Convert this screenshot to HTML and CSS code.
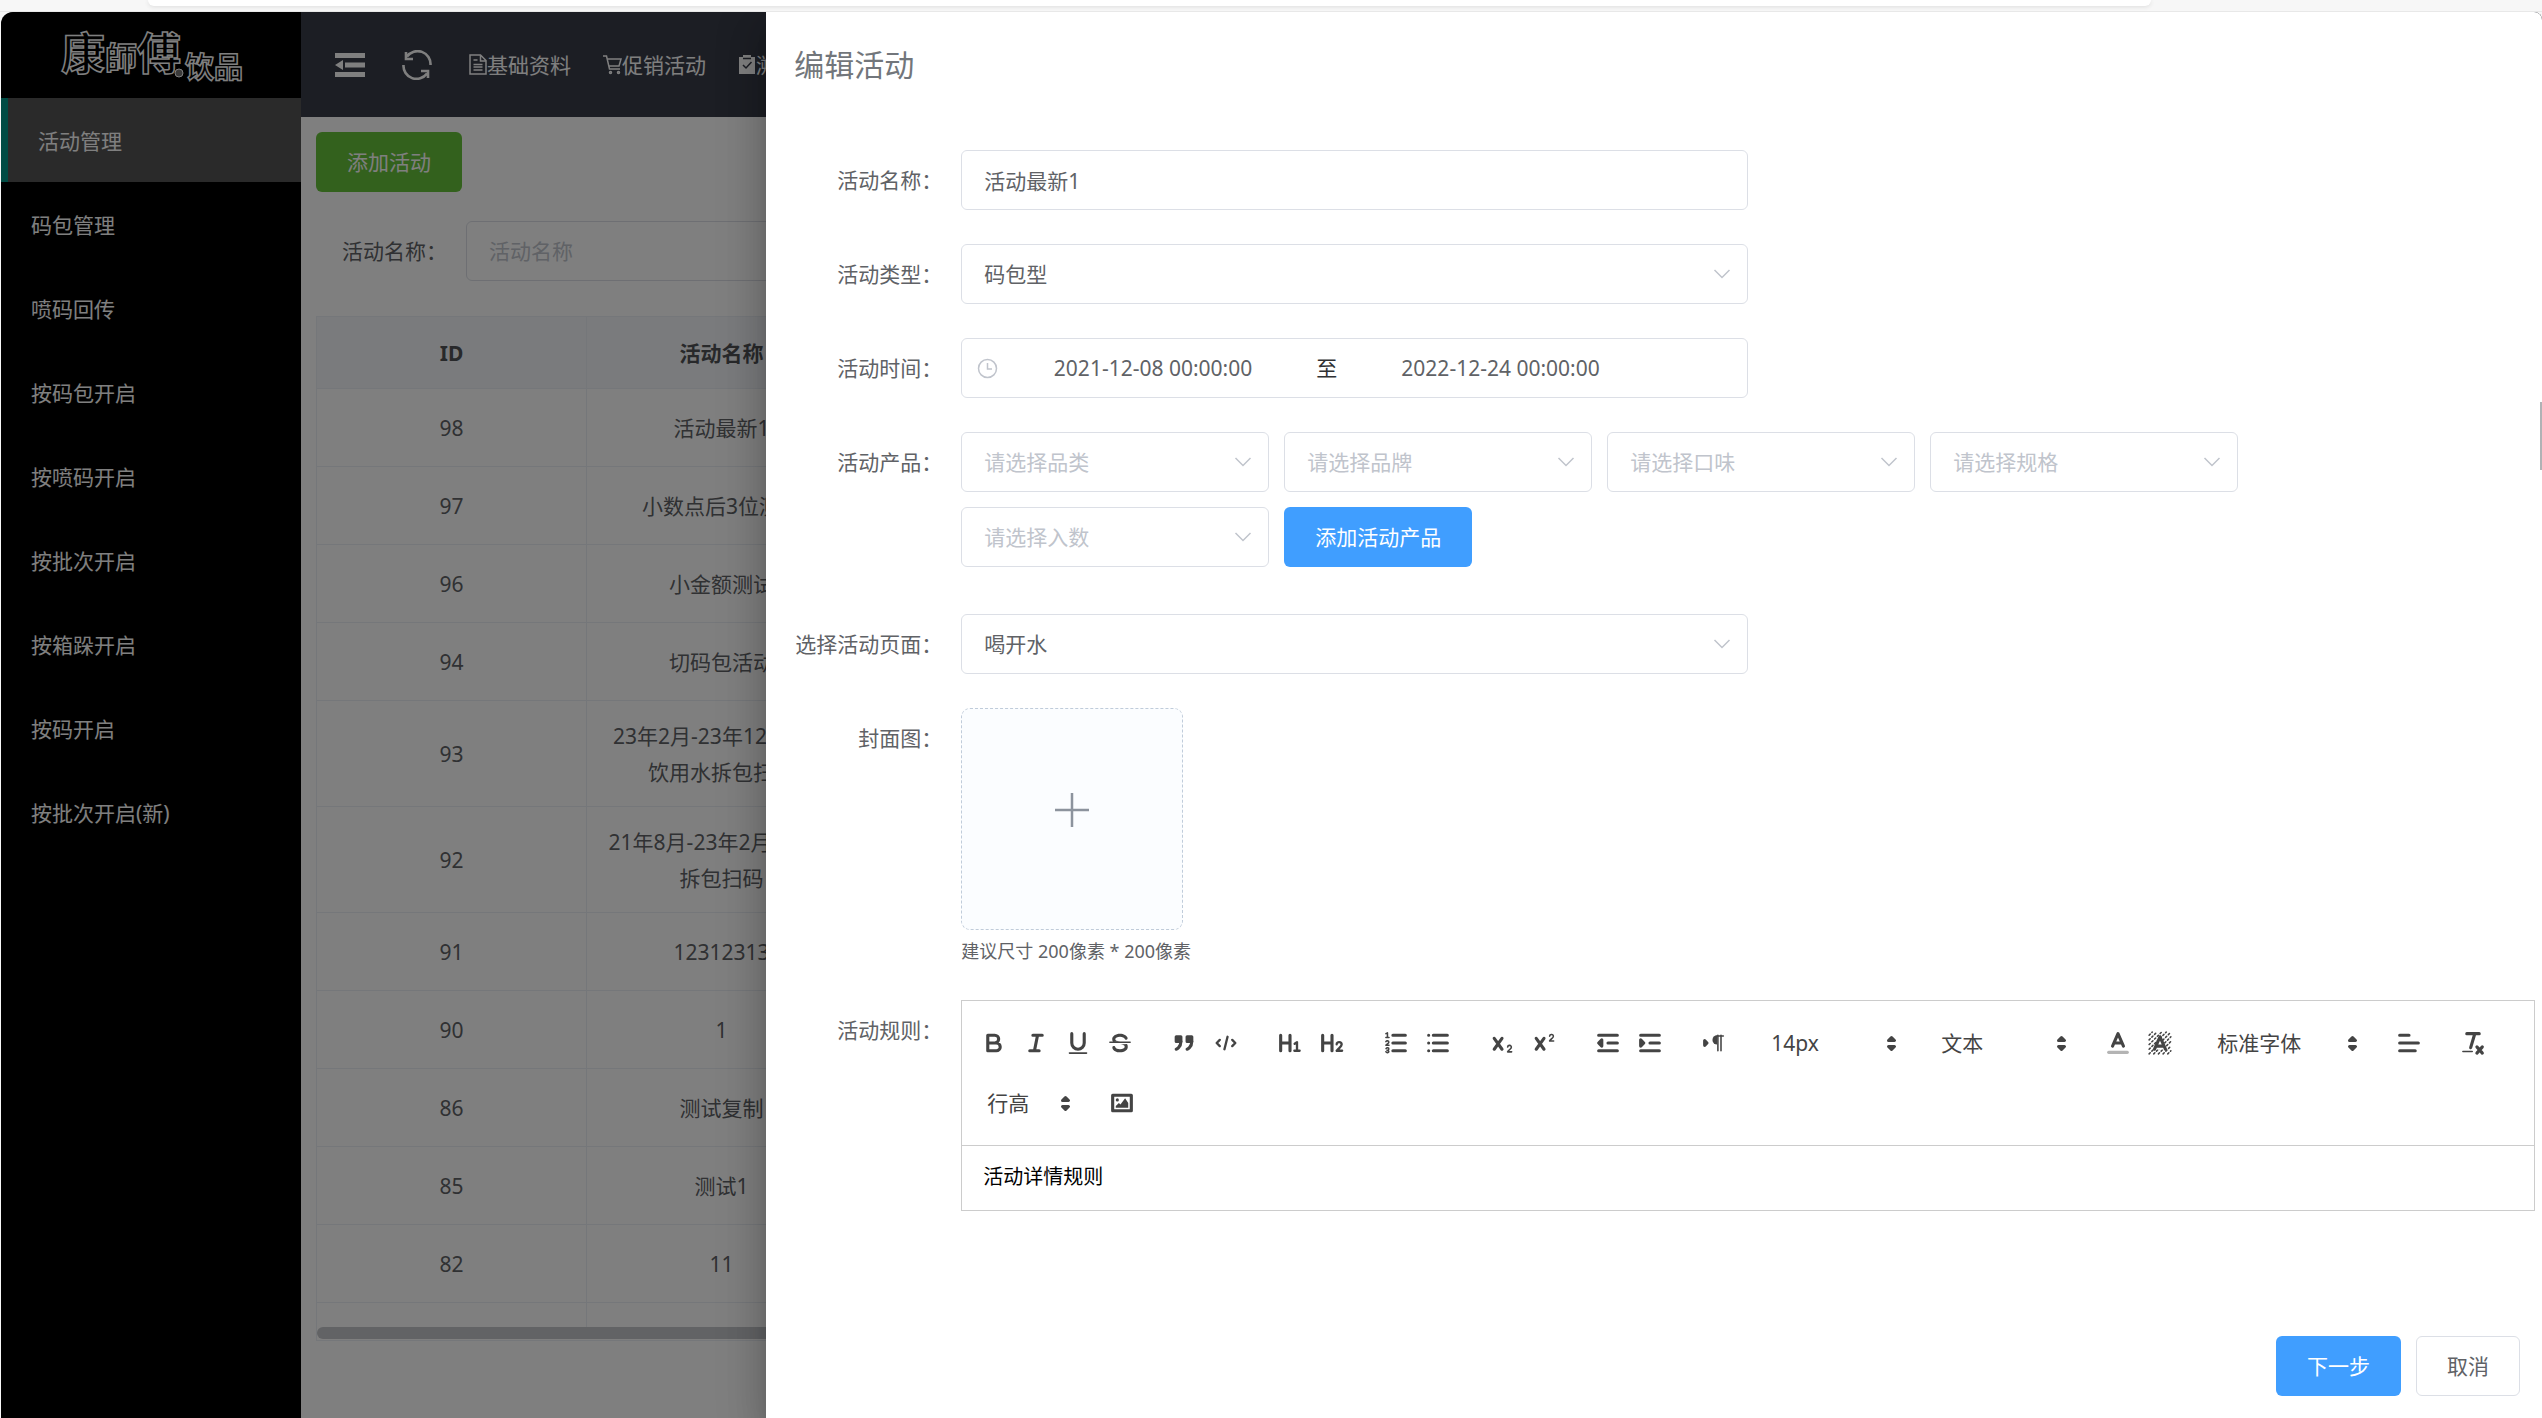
FILE: index.html
```html
<!DOCTYPE html>
<html lang="zh-CN">
<head>
<meta charset="utf-8">
<title>编辑活动</title>
<link rel="stylesheet" href="styles.css">
</head>
<body>
<svg class="sprite" aria-hidden="true">
  <symbol id="chevron" viewBox="0 0 18 18"><path d="M1.500 5 9 12.500 16.500 5" fill="none" stroke="#c0c4cc" stroke-width="1.500"/></symbol>
  <symbol id="sort" viewBox="0 0 18 18"><path d="M7 11 9 13 11 11ZM7 7 9 5 11 7Z" fill="#444" stroke="#444" stroke-width="2" stroke-linejoin="round"/></symbol>
</svg>

<div class="chrome"><div class="chrome-bar"></div></div>

<div class="app">
  <aside class="sidebar">
    <div class="logo">
      <svg width="200" height="86" viewBox="0 0 200 86" role="img" aria-label="康师傅饮品">
        <g class="logo-text">
          <text x="10" y="58" font-size="44">康</text>
          <text x="54" y="58" font-size="32">師</text>
          <text x="86" y="58" font-size="44">傅</text>
          <text x="134" y="66" font-size="29">饮品</text>
        </g>
        <circle cx="128" cy="61" r="4" fill="#777" stroke="#fff"/>
      </svg>
    </div>
    <nav class="menu">
      <a class="menu-item active" href="#">活动管理</a>
      <a class="menu-item" href="#">码包管理</a>
      <a class="menu-item" href="#">喷码回传</a>
      <a class="menu-item" href="#">按码包开启</a>
      <a class="menu-item" href="#">按喷码开启</a>
      <a class="menu-item" href="#">按批次开启</a>
      <a class="menu-item" href="#">按箱跺开启</a>
      <a class="menu-item" href="#">按码开启</a>
      <a class="menu-item" href="#">按批次开启(新)</a>
    </nav>
  </aside>

  <div class="main">
    <header class="topbar">
      <button class="top-btn" type="button" aria-label="收起菜单">
        <svg width="30" height="30" viewBox="0 0 30 30" fill="#fff"><path d="M0 3h30v5H0zM10 12.500h20v5H10zM0 22h30v5H0zM0 15l8-5v10z"/></svg>
      </button>
      <button class="top-btn" type="button" aria-label="刷新">
        <svg width="30" height="30" viewBox="0 0 30 30" fill="none" stroke="#fff" stroke-width="2.600"><path d="M5 6.500A13 13 0 0 1 28.500 15M1.500 15A13 13 0 0 0 25 23.500M4 2v7h7M26 28v-7h-7"/></svg>
      </button>
      <nav class="top-nav">
        <a href="#"><svg width="18" height="21" viewBox="0 0 18 21" fill="none" stroke="#fff" stroke-width="1.500"><path d="M1 1h10.500L17 6.500V20H1zM11.500 1v6H17M4.500 6h4M4.500 10.500h9M4.500 13h9M4.500 16h9"/></svg>基础资料</a>
        <a href="#"><svg width="19" height="21" viewBox="0 0 19 21" fill="none" stroke="#fff" stroke-width="1.500"><path d="M0 2h3.500l3 13H17M4.500 5H18l-2 7H6"/><circle cx="7.500" cy="18.500" r="1"/><circle cx="15.500" cy="18.500" r="1"/></svg>促销活动</a>
        <a href="#"><svg width="18" height="21" viewBox="0 0 18 21"><path d="M1 3h4V1h8v2h4v17H1z" fill="#fff"/><path d="M5 4.500h8M5 11l3 3 5.500-6" fill="none" stroke="#393d49" stroke-width="1.500"/></svg>溯源管理</a>
      </nav>
    </header>
    <section class="page">
      <button class="btn btn-success" type="button">添加活动</button>
      <div class="search">
        <label for="q">活动名称：</label>
        <input class="field" id="q" type="text" placeholder="活动名称">
      </div>
      <div class="table-wrap">
        <table class="table">
          <colgroup><col class="col"><col class="col"><col></colgroup>
          <thead><tr><th>ID</th><th>活动名称</th><th></th></tr></thead>
          <tbody>
            <tr><td>98</td><td>活动最新1</td><td></td></tr>
            <tr><td>97</td><td>小数点后3位测试</td><td></td></tr>
            <tr><td>96</td><td>小金额测试</td><td></td></tr>
            <tr><td>94</td><td>切码包活动</td><td></td></tr>
            <tr class="tall"><td>93</td><td>23年2月-23年12月包装<br>饮用水拆包扫码</td><td></td></tr>
            <tr class="tall"><td>92</td><td>21年8月-23年2月饮用水<br>拆包扫码</td><td></td></tr>
            <tr><td>91</td><td>12312313</td><td></td></tr>
            <tr><td>90</td><td>1</td><td></td></tr>
            <tr><td>86</td><td>测试复制</td><td></td></tr>
            <tr><td>85</td><td>测试1</td><td></td></tr>
            <tr><td>82</td><td>11</td><td></td></tr>
            <tr class="cut"><td></td><td></td><td></td></tr>
          </tbody>
        </table>
        <div class="scroll-thumb"></div>
      </div>
    </section>
  </div>

  <div class="mask"></div>

  <form class="drawer" aria-labelledby="drawer-title">
    <h1 class="drawer-title" id="drawer-title">编辑活动</h1>
    <div class="drawer-body">
      <div class="row">
        <label for="name">活动名称：</label>
        <input class="field half" id="name" type="text" value="活动最新1">
      </div>
      <div class="row">
        <label for="type">活动类型：</label>
        <div class="select half"><select class="field" id="type"><option>码包型</option></select><svg><use href="#chevron"/></svg></div>
      </div>
      <div class="row">
        <label for="start">活动时间：</label>
        <div class="field half range">
          <svg width="21" height="21" viewBox="0 0 21 21" fill="none" stroke="#c0c4cc" stroke-width="1.500"><circle cx="10.500" cy="10.500" r="9"/><path d="M10.500 5v6h4.500"/></svg>
          <input id="start" type="text" value="2021-12-08 00:00:00">
          <span>至</span>
          <input type="text" value="2022-12-24 00:00:00" aria-label="结束时间">
        </div>
      </div>
      <div class="row">
        <label for="cat">活动产品：</label>
        <div class="products">
          <div class="select empty"><select class="field" id="cat"><option>请选择品类</option></select><svg><use href="#chevron"/></svg></div>
          <div class="select empty"><select class="field" aria-label="品牌"><option>请选择品牌</option></select><svg><use href="#chevron"/></svg></div>
          <div class="select empty"><select class="field" aria-label="口味"><option>请选择口味</option></select><svg><use href="#chevron"/></svg></div>
          <div class="select empty"><select class="field" aria-label="规格"><option>请选择规格</option></select><svg><use href="#chevron"/></svg></div>
          <div class="select empty"><select class="field" aria-label="入数"><option>请选择入数</option></select><svg><use href="#chevron"/></svg></div>
          <button class="btn btn-primary" type="button">添加活动产品</button>
        </div>
      </div>
      <div class="row">
        <label for="page">选择活动页面：</label>
        <div class="select half"><select class="field" id="page"><option>喝开水</option></select><svg><use href="#chevron"/></svg></div>
      </div>
      <div class="row">
        <label for="cover">封面图：</label>
        <div>
          <button class="upload" id="cover" type="button" aria-label="上传封面图">
            <svg width="36" height="36" viewBox="0 0 36 36" stroke="#8c939d" stroke-width="2.500"><path d="M18 1v34M1 18h34"/></svg>
          </button>
          <p class="hint">建议尺寸 200像素 * 200像素</p>
        </div>
      </div>
      <div class="row">
        <label for="rules">活动规则：</label>
        <div class="editor">
          <div class="toolbar">
            <div class="group">
              <button type="button" aria-label="加粗"><svg viewBox="0 0 18 18"><path class="s" d="M5 4h4.500A2.500 2.500 0 0 1 12 6.500 2.500 2.500 0 0 1 9.500 9H5V4ZM5 9h5.500a2.500 2.500 0 0 1 2.500 2.500 2.500 2.500 0 0 1-2.500 2.500H5V9Z"/></svg></button>
              <button type="button" aria-label="斜体"><svg viewBox="0 0 18 18"><path class="s" d="M7 4h6M5 14h6M8 14 10 4"/></svg></button>
              <button type="button" aria-label="下划线"><svg viewBox="0 0 18 18"><path class="s" d="M5 3v6a4 4 0 0 0 8 0V3"/><rect class="f" x="3" y="15" width="12" height="1" rx=".5"/></svg></button>
              <button type="button" aria-label="删除线"><svg viewBox="0 0 18 18"><path class="s t" d="M15.500 8.500h-13"/><path class="f" d="M9.007 8C6.542 7.791 6 7.519 6 6.500 6 5.792 7.283 5 9 5c1.571 0 2.765.679 2.969 1.309a1 1 0 0 0 1.900-.617C13.356 4.106 11.354 3 9 3 6.200 3 4 4.538 4 6.500a3.200 3.200 0 0 0 .5 1.843ZM8.984 10C11.457 10.208 12 10.479 12 11.500c0 .708-1.283 1.500-3 1.500-1.571 0-2.765-.679-2.969-1.309a1 1 0 1 0-1.900.617C4.644 13.894 6.646 15 9 15c2.800 0 5-1.538 5-3.500a3.200 3.200 0 0 0-.5-1.843Z"/></svg></button>
            </div>
            <div class="group">
              <button type="button" aria-label="引用"><svg viewBox="0 0 18 18"><path class="f s" d="M4 5h3v3H4zM11 5h3v3h-3z"/><path class="s" d="M7 8c0 4.031-3 5-3 5M14 8c0 4.031-3 5-3 5"/></svg></button>
              <button type="button" aria-label="代码"><svg viewBox="0 0 18 18"><path class="s m" d="M5 7 3 9l2 2M13 7l2 2-2 2M10 5 8 13"/></svg></button>
            </div>
            <div class="group">
              <button type="button" aria-label="一级标题"><svg viewBox="0 0 18 18"><path class="s" d="M3 4v10M9 4v10M3 9h6"/><path class="s m" d="M12 9.500 13.500 8.500V14M11.800 14h3.400"/></svg></button>
              <button type="button" aria-label="二级标题"><svg viewBox="0 0 18 18"><path class="s" d="M3 4v10M9 4v10M3 9h6"/><path class="s m" d="M12 9.800c0-1.800 3.200-1.800 3.200.2 0 1.200-1.500 2-3.200 4h3.500"/></svg></button>
            </div>
            <div class="group">
              <button type="button" aria-label="有序列表"><svg viewBox="0 0 18 18"><path class="s" d="M7 4h8M7 9h8M7 14h8"/><path class="s t" d="M2.500 5.500h2M3.500 5.500v-3l-1 .5M4.500 10.500h-2c0-.3 1.900-1.200 1.900-2 0-1-1.400-1.200-1.900-.4M2.500 14.600c.500 1 1.900.6 1.900-.1s-.5-.8-1.200-.8c.7 0 1.200-.3 1.200-.9 0-.8-1.300-1-1.800-.2"/></svg></button>
              <button type="button" aria-label="无序列表"><svg viewBox="0 0 18 18"><path class="s" d="M6 4h9M6 9h9M6 14h9M3 4v.01M3 9v.01M3 14v.01"/></svg></button>
            </div>
            <div class="group">
              <button type="button" aria-label="下标"><svg viewBox="0 0 18 18"><path class="s" d="M4 6l5 7M9 6l-5 7"/><path class="s t" d="M12.600 11.600c.200-1.600 2.600-1.300 2.400.2-.1 1-1.600 1.500-2.400 2.900h2.600"/></svg></button>
              <button type="button" aria-label="上标"><svg viewBox="0 0 18 18"><path class="s" d="M4 6l5 7M9 6l-5 7"/><path class="s t" d="M12.600 4.600c.200-1.600 2.600-1.300 2.400.2-.1 1-1.600 1.500-2.400 2.900h2.600"/></svg></button>
            </div>
            <div class="group">
              <button type="button" aria-label="减少缩进"><svg viewBox="0 0 18 18"><path class="s" d="M3 14h12M3 4h12M9 9h6"/><path class="f s" d="M5 7v4L3 9z"/></svg></button>
              <button type="button" aria-label="增加缩进"><svg viewBox="0 0 18 18"><path class="s" d="M3 14h12M3 4h12M9 9h6"/><path class="f s" d="M3 7v4l2-2z"/></svg></button>
            </div>
            <div class="group">
              <button type="button" aria-label="文字方向"><svg viewBox="0 0 18 18"><path class="f s" d="M3 7.500v3L4.500 9z"/><path class="f" d="M11 4a2.600 2.600 0 0 0 0 6z"/><path class="s t" d="M15 4.500h-4M11.500 4v10M13.500 4v10"/></svg></button>
            </div>
            <div class="group"><div class="picker"><select aria-label="字号"><option>14px</option></select><svg><use href="#sort"/></svg></div></div>
            <div class="group"><div class="picker"><select aria-label="段落"><option>文本</option></select><svg><use href="#sort"/></svg></div></div>
            <div class="group">
              <button type="button" aria-label="文字颜色"><svg viewBox="0 0 18 18"><path d="M3 15h12" stroke="#b4b4b4" stroke-width="2" stroke-linecap="round"/><path class="s" d="M5.500 11 9 3l3.500 8M6.500 9h5"/></svg></button>
              <button type="button" aria-label="背景颜色"><svg viewBox="0 0 18 18"><path class="s t hatch" d="M2 4l2-2M2 7l5-5M2 10l8-8M2 13l11-11M2 16l14-14M5 16l11-11M8 16l8-8M11 16l5-5M14 16l2-2"/><path d="M5.500 13 9 5l3.500 8z" fill="#fff"/><path class="s" d="M5.500 13 9 5l3.500 8M6.500 11h5"/></svg></button>
            </div>
            <div class="group"><div class="picker font"><select aria-label="字体"><option>标准字体</option></select><svg><use href="#sort"/></svg></div></div>
            <div class="group">
              <button type="button" aria-label="对齐"><svg viewBox="0 0 18 18"><path class="s" d="M3 9h12M3 14h10M3 4h6"/></svg></button>
            </div>
            <div class="group">
              <button type="button" aria-label="清除格式"><svg viewBox="0 0 18 18"><path class="s" d="M5 3h8M7.500 12 10 3.500M11.500 11.500l3.500 4M15 11.500l-3.500 4"/><rect class="f" x="2" y="14" width="7" height="1" rx=".5"/></svg></button>
            </div>
            <div class="group"><div class="picker narrow"><select aria-label="行高"><option>行高</option></select><svg><use href="#sort"/></svg></div></div>
            <div class="group">
              <button type="button" aria-label="图片"><svg viewBox="0 0 18 18"><path class="s" d="M3 4h12v10H3z"/><circle class="f" cx="6" cy="7" r="1"/><path class="f" d="M5 12v-1l2-2 1 1 3-4 2 3v3z"/></svg></button>
            </div>
          </div>
          <textarea id="rules" rows="1">活动详情规则</textarea>
        </div>
      </div>
    </div>
    <footer class="drawer-footer">
      <button class="btn btn-primary" type="button">下一步</button>
      <button class="btn btn-plain" type="button">取消</button>
    </footer>
    <div class="page-thumb"></div>
  </form>
</div>
</body>
</html>
```
FILE: styles.css
```css
* {
  box-sizing: border-box;
}

body {
  margin: 0;
  height: 100vh;
  display: flex;
  flex-direction: column;
  overflow: hidden;
  background: #f7f7f7;
  color: #606266;
  font: 21px/34px "Noto Sans", "Noto Sans CJK SC", sans-serif;
}

button,
input,
select,
textarea {
  font: inherit;
  color: inherit;
  margin: 0;
  padding: 0;
  border: 0;
  background: none;
  outline: 0;
}

a {
  color: inherit;
  text-decoration: none;
}

.sprite {
  position: absolute;
  width: 0;
  height: 0;
}

/* strip above the page */
.chrome {
  flex: none;
  height: 12px;
  padding: 0 391px 0 148px;
  border-bottom: 1px solid #e8e8e8;
}

.chrome-bar {
  height: 6px;
  border-radius: 0 0 24px 24px;
  background: #fff;
  box-shadow: 0 1px 4px #ddd;
}

.app {
  position: relative;
  flex: 1;
  min-height: 0;
  display: flex;
  margin-left: 1px;
  overflow: hidden;
  border-radius: 12px 8px 0 0;
  background: #fff;
}

/* sidebar */
.sidebar {
  flex: none;
  width: 300px;
  background: #000;
  color: #fff;
}

.logo {
  height: 86px;
  padding-left: 50px;
}

.logo svg {
  display: block;
}

.logo-text {
  font-family: "Noto Sans CJK TC", sans-serif;
  font-weight: 700;
  fill: #000;
  stroke: #fff;
  stroke-width: 1.500;
}

.menu-item {
  display: block;
  padding: 2px 0 0 30px;
  line-height: 82px;
}

.menu-item.active {
  border-left: 7px solid #009688;
  background: #545454;
}

/* main area */
.main {
  flex: 1;
  min-width: 0;
  display: flex;
  flex-direction: column;
}

.topbar {
  flex: none;
  height: 105px;
  display: flex;
  align-items: center;
  gap: 37px;
  padding-left: 34px;
  background: #393d49;
  color: #fff;
}

.top-btn {
  display: flex;
}

.top-nav {
  display: flex;
  gap: 32px;
  white-space: nowrap;
}

.top-nav a {
  display: flex;
  align-items: center;
}

.page {
  padding: 15px;
}

.btn {
  height: 60px;
  padding: 0 31px;
  border-radius: 6px;
  color: #fff;
}

.btn-success {
  background: #67c23a;
}

.btn-primary {
  background: #409eff;
}

.btn-plain {
  padding: 0 30px;
  border: 1px solid #dcdfe6;
  color: #606266;
  background: #fff;
}

.search {
  display: flex;
  align-items: center;
  gap: 19px;
  margin: 29px 0 35px;
  padding-left: 26px;
}

.field {
  width: 100%;
  height: 60px;
  padding: 0 22px;
  border: 1px solid #dcdfe6;
  border-radius: 6px;
}

.search .field {
  width: 340px;
}

.field::placeholder {
  color: #c0c4cc;
  opacity: 1;
}

.table-wrap {
  height: 1025px;
  overflow: hidden;
  display: flex;
  flex-direction: column;
  border: 1px solid #ebeef5;
}

.table {
  width: 100%;
  table-layout: fixed;
  border-collapse: separate;
  border-spacing: 0;
  text-align: center;
}

.col {
  width: 270px;
}

.table th,
.table td {
  height: 78px;
  padding: 0 15px;
  border-right: 1px solid #ebeef5;
  border-bottom: 1px solid #ebeef5;
  line-height: 36px;
}

.table td {
  white-space: nowrap;
}

.table th {
  height: 72px;
  background: #f5f7fa;
  color: #515356;
}

.table .tall td {
  height: 106px;
}

.table .cut td {
  height: 24px;
  border-bottom: 0;
}

.scroll-thumb {
  flex: none;
  height: 12px;
  border-radius: 6px;
  background: #c4c6ca;
}

/* overlay and drawer */
.mask {
  position: absolute;
  inset: 0;
  background: rgba(0, 0, 0, .5);
}

.drawer {
  position: absolute;
  top: 0;
  right: 0;
  bottom: 0;
  width: calc(70% - 3px);
  display: flex;
  flex-direction: column;
  background: #fff;
  box-shadow: 0 12px 15px -8px rgba(0, 0, 0, .2), 0 24px 36px 3px rgba(0, 0, 0, .14), 0 9px 45px 8px rgba(0, 0, 0, .12);
}

.drawer-title {
  margin: 0;
  padding: 30px 28px 62px;
  font-size: 30px;
  font-weight: 400;
  line-height: 46px;
  color: #72767b;
}

.drawer-body {
  display: flex;
  flex-direction: column;
  gap: 34px;
  padding: 0 7px 0 28px;
}

.row {
  display: grid;
  grid-template-columns: 148px minmax(0, 1fr);
  column-gap: 19px;
}

.row > label {
  line-height: 60px;
  text-align: right;
  white-space: nowrap;
}

.half {
  width: 50%;
}

.select {
  display: grid;
  align-items: center;
}

.select > * {
  grid-area: 1 / 1;
}

.select select,
.picker select {
  appearance: none;
}

.select svg {
  width: 18px;
  height: 18px;
  margin-right: 17px;
  justify-self: end;
  pointer-events: none;
}

.empty {
  width: 308px;
  color: #c0c4cc;
}

.range {
  display: flex;
  align-items: center;
  padding: 0 15px;
}

.range input {
  width: 41%;
  text-align: center;
}

.range span {
  width: 38px;
  text-align: center;
  color: #303133;
}

.products {
  display: flex;
  flex-wrap: wrap;
  gap: 15px;
  padding-bottom: 13px;
}

.upload {
  display: flex;
  align-items: center;
  justify-content: center;
  width: 222px;
  height: 222px;
  padding-bottom: 18px;
  border: 1px dashed #c0ccda;
  border-radius: 9px;
  background: #fbfdff;
}

.hint {
  margin: 6px 0 0;
  font-size: 18px;
  line-height: 30px;
}

/* rich text editor */
.editor {
  border: 1px solid #ccc;
}

.toolbar {
  display: flex;
  flex-wrap: wrap;
  padding: 12px 11px;
  border-bottom: 1px solid #ccc;
  color: #444;
}

.group {
  display: flex;
  align-items: center;
  height: 60px;
  margin-right: 22px;
}

.toolbar button {
  width: 42px;
  height: 36px;
  padding: 4px 7px;
}

.toolbar button svg {
  display: block;
  width: 28px;
  height: 28px;
}

.s {
  fill: none;
  stroke: #444;
  stroke-width: 2;
  stroke-linecap: round;
  stroke-linejoin: round;
}

.m {
  stroke-width: 1.500;
}

.t {
  stroke-width: 1;
}

.hatch {
  stroke-dasharray: 1 1.500;
}

.f {
  fill: #444;
}

.picker {
  display: grid;
  align-items: center;
  width: 148px;
}

.picker.font {
  width: 163px;
}

.picker.narrow {
  width: 106px;
}

.picker > * {
  grid-area: 1 / 1;
}

.picker select {
  width: 100%;
  height: 36px;
  padding-left: 14px;
}

.picker svg {
  width: 27px;
  height: 27px;
  justify-self: end;
  pointer-events: none;
}

.editor textarea {
  display: block;
  width: 100%;
  height: 64px;
  padding: 14px 21px;
  resize: none;
  overflow: hidden;
  font-size: 20px;
  color: #000;
}

.drawer-footer {
  display: flex;
  justify-content: flex-end;
  gap: 15px;
  margin-top: auto;
  padding: 22px;
}

.page-thumb {
  position: absolute;
  top: 390px;
  right: 0;
  width: 2px;
  height: 68px;
  background: #b0b2b5;
}
```
